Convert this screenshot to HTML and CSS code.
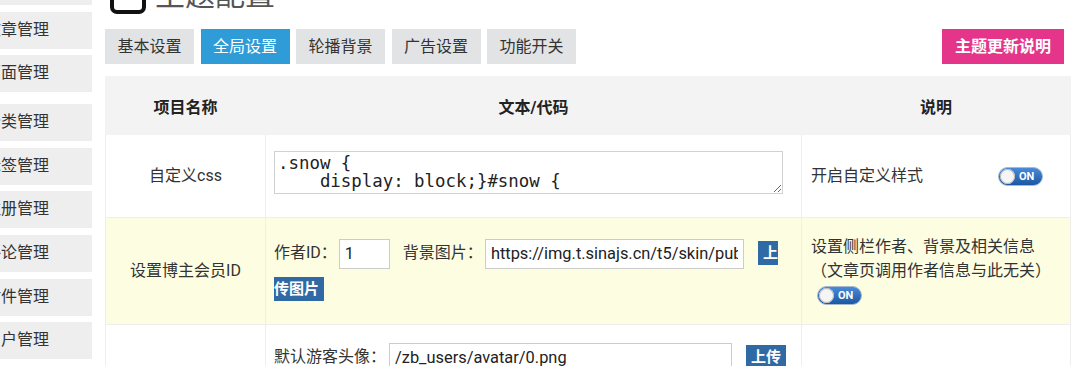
FILE: index.html
```html
<!DOCTYPE html>
<html lang="zh-CN">
<head>
<meta charset="utf-8">
<title>主题配置</title>
<link rel="stylesheet" href="styles.css">
</head>
<body>
<div class="page">
  <nav class="sidebar">
    <div class="nav-item">后台首页</div>
    <div class="nav-item">文章管理</div>
    <div class="nav-item">页面管理</div>
    <div class="nav-item group-start">分类管理</div>
    <div class="nav-item">标签管理</div>
    <div class="nav-item">注册管理</div>
    <div class="nav-item">评论管理</div>
    <div class="nav-item">附件管理</div>
    <div class="nav-item">用户管理</div>
  </nav>
  <main class="main">
    <div class="title-row">
      <span class="title-icon"></span>
      <span class="title-text">主题配置</span>
    </div>
    <div class="toolbar">
      <span class="tab">基本设置</span>
      <span class="tab active">全局设置</span>
      <span class="tab">轮播背景</span>
      <span class="tab">广告设置</span>
      <span class="tab">功能开关</span>
      <span class="btn-notes">主题更新说明</span>
    </div>
    <table class="config">
      <colgroup><col class="c1"><col class="c2"><col class="c3"></colgroup>
      <thead>
        <tr><th>项目名称</th><th>文本/代码</th><th>说明</th></tr>
      </thead>
      <tbody>
        <tr class="row-css">
          <td class="name">自定义css</td>
          <td class="value code-cell"><textarea class="code" spellcheck="false">.snow {
    display: block;}#snow {</textarea></td>
          <td class="desc"><span class="desc-label">开启自定义样式</span><span class="switch"><span class="knob"></span>ON</span></td>
        </tr>
        <tr class="row-author">
          <td class="name">设置博主会员ID</td>
          <td class="value fields">作者ID：<input class="field f-id" value="1">背景图片：<input class="field f-bg" value="https://img.t.sinajs.cn/t5/skin/public/profile_cover/001.jpg"><span class="upload">上传图片</span></td>
          <td class="desc">设置侧栏作者、背景及相关信息<br>（文章页调用作者信息与此无关）<br><span class="switch sw-indent"><span class="knob"></span>ON</span></td>
        </tr>
        <tr class="row-avatar">
          <td class="name">默认头像</td>
          <td class="value fields">默认游客头像：<input class="field f-avatar" value="/zb_users/avatar/0.png"><span class="upload">上传</span><br>默认用户头像：<input class="field f-avatar" value="/zb_users/avatar/1.png"><span class="upload">上传</span></td>
          <td class="desc"></td>
        </tr>
      </tbody>
    </table>
  </main>
</div>
</body>
</html>
```

FILE: styles.css
```css
html, body {
  margin: 0;
  padding: 0;
}
body {
  width: 1080px;
  height: 366px;
  overflow: hidden;
  background: #fff;
  color: #333;
  font-family: Roboto, "Noto Sans CJK SC", sans-serif;
  font-size: 16px;
}
.page {
  display: flex;
  gap: 13px;
  margin-top: -32px;
}
.sidebar {
  width: 92px;
  flex: none;
  overflow: hidden;
  display: flex;
  flex-direction: column;
  gap: 6.6px;
}
.nav-item {
  height: 37px;
  line-height: 36px;
  background: #eeeeee;
  white-space: nowrap;
  text-indent: -15px;
  color: #333;
}
.nav-item.group-start {
  margin-top: 5.4px;
}
.main {
  width: 965px;
  flex: none;
}
.title-row {
  display: flex;
  align-items: flex-end;
  height: 46px;
  margin-bottom: 15px;
}
.title-icon {
  width: 28px;
  height: 32px;
  border: 4px solid #111;
  border-radius: 7px;
  margin-left: 5px;
}
.title-text {
  font-size: 30px;
  line-height: 30px;
  margin-left: 9px;
  margin-bottom: 4px;
  color: #555;
}
.toolbar {
  display: flex;
  gap: 6.5px;
  height: 35px;
  margin-bottom: 12px;
}
.tab {
  padding: 0 12.5px;
  line-height: 35px;
  background: #e2e3e5;
  color: #333;
}
.tab.active {
  background: #2f9bd7;
  color: #fff;
}
.btn-notes {
  margin-left: auto;
  margin-right: 6px;
  padding: 0 13px;
  line-height: 35px;
  background: #e5358b;
  color: #fff;
  font-weight: bold;
}
.config {
  width: 965px;
  border-collapse: collapse;
  table-layout: fixed;
}
.c1 { width: 160px; }
.c2 { width: 536px; }
.c3 { width: 269px; }
.config th {
  height: 57px;
  padding: 0;
  background: #f3f3f3;
  border: 1px solid #f3f3f3;
  font-weight: bold;
  color: #222;
}
.config td {
  border: 1px solid #eeeeee;
  padding: 15px 9px;
  line-height: 24px;
  vertical-align: middle;
}
.config td.name {
  text-align: center;
  padding: 15px 4px;
}
.config td.value {
  padding-left: 8px;
  padding-right: 12px;
}
.row-css td.code-cell {
  padding-top: 16px;
  padding-bottom: 23px;
}
.row-author td {
  background: #fdfde2;
  padding-top: 17px;
  padding-bottom: 17px;
}
.row-avatar td.value {
  padding-top: 14px;
  vertical-align: top;
}
.code {
  display: block;
  box-sizing: border-box;
  width: 509px;
  height: 43px;
  margin: 0;
  padding: 2px 3px 1px;
  border: 1px solid #d2d2d2;
  font-family: "DejaVu Sans Mono", monospace;
  font-size: 17.4px;
  line-height: 18px;
  color: #222;
  overflow: hidden;
  resize: both;
  white-space: pre;
}
.config td.fields {
  line-height: 36px;
}
.field {
  box-sizing: border-box;
  height: 30px;
  margin: 0;
  padding: 0 5px;
  border: 1px solid #cccccc;
  font-family: Roboto, "Noto Sans CJK SC", sans-serif;
  font-size: 16.4px;
  color: #222;
  background: #fff;
  vertical-align: middle;
}
.f-id {
  width: 51px;
  margin-left: 2px;
  margin-right: 13px;
}
.f-bg {
  width: 259px;
  margin-left: 2px;
}
.f-avatar {
  width: 343px;
  margin-left: 3px;
}
.upload {
  margin-left: 14px;
  padding: 3px 5px;
  background: #2f6aa5;
  color: #fff;
  font-weight: bold;
  font-size: 15px;
}
.desc-label {
  display: inline-block;
  width: 181px;
}
.switch {
  display: inline-flex;
  align-items: center;
  gap: 4px;
  box-sizing: border-box;
  width: 45px;
  height: 19px;
  padding: 1px;
  margin-left: 6px;
  border: 1px solid #a9b9cc;
  border-radius: 10px;
  background: linear-gradient(#4a8ad6, #1b58a3);
  color: #fff;
  font-family: Roboto, sans-serif;
  font-weight: bold;
  font-size: 11px;
  line-height: 1;
  vertical-align: middle;
}
.knob {
  width: 15px;
  height: 15px;
  border-radius: 50%;
  background: #f5f5f5;
  box-shadow: inset 0 0 0 1px #b9b9b9;
}
.sw-indent {
  margin-left: 6px;
}
```
